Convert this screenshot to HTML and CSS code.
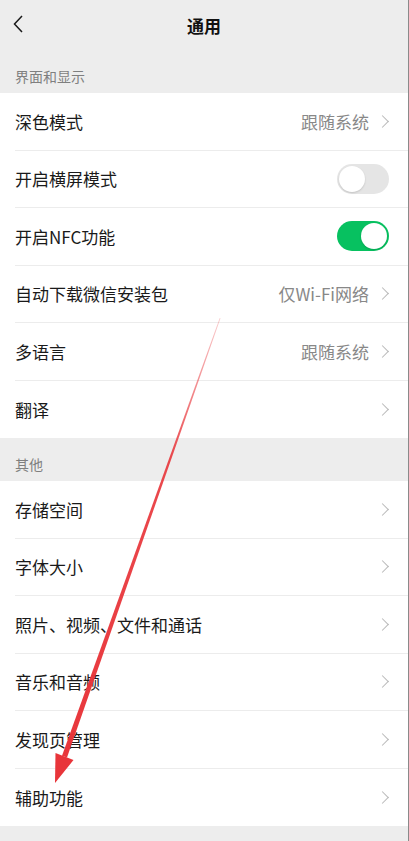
FILE: index.html
```html
<!DOCTYPE html>
<html lang="zh-CN">
<head>
  <meta charset="UTF-8">
  <meta name="viewport" content="width=device-width, initial-scale=1.0">
  <title>通用</title>
  <link rel="stylesheet" href="styles.css">
</head>
<body>
  <div class="page">
    <header class="topbar">
      <svg class="back" width="12" height="20" viewBox="0 0 12 20">
        <path d="M10 2 L2.5 10 L10 18" fill="none" stroke="#1a1a1a" stroke-width="1.5"/>
      </svg>
      <h1>通用</h1>
    </header>

    <div class="section-title">界面和显示</div>
    <ul class="group">
      <li class="row"><div class="row-body"><span class="label">深色模式</span><span class="value">跟随系统</span><i class="arrow"></i></div></li>
      <li class="row"><div class="row-body"><span class="label">开启横屏模式</span><span class="switch"></span></div></li>
      <li class="row"><div class="row-body"><span class="label">开启NFC功能</span><span class="switch on"></span></div></li>
      <li class="row"><div class="row-body"><span class="label">自动下载微信安装包</span><span class="value">仅Wi-Fi网络</span><i class="arrow"></i></div></li>
      <li class="row"><div class="row-body"><span class="label">多语言</span><span class="value">跟随系统</span><i class="arrow"></i></div></li>
      <li class="row"><div class="row-body"><span class="label">翻译</span><i class="arrow"></i></div></li>
    </ul>

    <div class="section-title">其他</div>
    <ul class="group">
      <li class="row"><div class="row-body"><span class="label">存储空间</span><i class="arrow"></i></div></li>
      <li class="row"><div class="row-body"><span class="label">字体大小</span><i class="arrow"></i></div></li>
      <li class="row"><div class="row-body"><span class="label">照片、视频、文件和通话</span><i class="arrow"></i></div></li>
      <li class="row"><div class="row-body"><span class="label">音乐和音频</span><i class="arrow"></i></div></li>
      <li class="row"><div class="row-body"><span class="label">发现页管理</span><i class="arrow"></i></div></li>
      <li class="row"><div class="row-body"><span class="label">辅助功能</span><i class="arrow"></i></div></li>
    </ul>

    <!-- 标注箭头 -->
    <svg class="pointer" width="409" height="841" viewBox="0 0 409 841">
      <defs>
        <linearGradient id="fade" x1="220" y1="318" x2="60" y2="780" gradientUnits="userSpaceOnUse">
          <stop offset="0" stop-color="#e8353a" stop-opacity="0.25"/>
          <stop offset="0.3" stop-color="#e8353a" stop-opacity="0.9"/>
          <stop offset="1" stop-color="#e8353a"/>
        </linearGradient>
      </defs>
      <polygon points="219.7,318 220.5,318.3 67,757.4 62,755.8" fill="url(#fade)"/>
      <polygon points="55,783 55.5,753 73.5,760" fill="#e8353a"/>
    </svg>
  </div>
</body>
</html>
```

FILE: styles.css
```css
* {
  margin: 0;
  padding: 0;
  box-sizing: border-box;
}

body {
  background-color: #ededed;
  font-family: "Noto Sans CJK SC", "Noto Sans", sans-serif;
  color: #1a1a1a;
}

.page {
  position: relative;
  min-height: 841px;
  border-right: 1px solid #8a8a8a;
  background-color: #ededed;
}

/* 顶部导航 */
.topbar {
  height: 50px;
  display: flex;
  align-items: center;
  justify-content: center;
  position: relative;
}

.topbar h1 {
  font-size: 17px;
  font-weight: 700;
  color: #111;
}

.back {
  position: absolute;
  left: 12px;
  top: 14px;
}

.section-title {
  font-size: 14px;
  line-height: 20px;
  color: #7f7f7f;
  padding: 16px 15px 7px;
}

.group {
  list-style: none;
  background-color: #ffffff;
}

.row {
  padding-left: 15px;
}

.row-body {
  height: 57.5px;
  display: flex;
  align-items: center;
  padding-right: 19px;
  border-bottom: 1px solid #ececec;
}

.row:last-child .row-body {
  border-bottom: none;
}

.label {
  flex: 1;
  font-size: 17px;
  color: #1a1a1a;
}

.value {
  font-size: 17px;
  color: #888888;
  margin-right: 9px;
}

.arrow {
  width: 9px;
  height: 9px;
  border-top: 1.5px solid #b8b8b8;
  border-right: 1.5px solid #b8b8b8;
  transform: rotate(45deg);
  margin-right: 2px;
}

/* 开关 */
.switch {
  width: 52px;
  height: 30px;
  border-radius: 15px;
  background-color: #e5e5e5;
  position: relative;
}

.switch::after {
  content: "";
  position: absolute;
  top: 2px;
  left: 2px;
  width: 26px;
  height: 26px;
  border-radius: 50%;
  background-color: #ffffff;
  box-shadow: 0 1px 2px rgba(0, 0, 0, 0.15);
}

.switch.on {
  background-color: #07c160;
}

.switch.on::after {
  left: 24px;
}

.pointer {
  position: absolute;
  left: 0;
  top: 0;
  pointer-events: none;
}
```
